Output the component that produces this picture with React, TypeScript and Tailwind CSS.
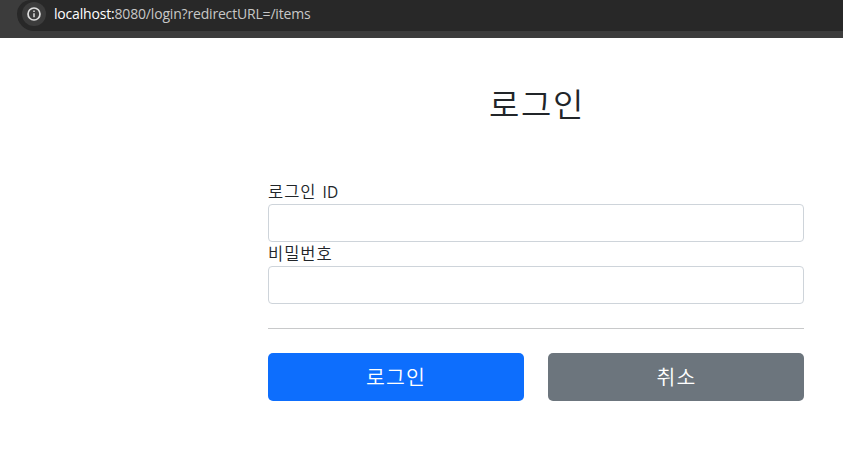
const fields = [
    { id: "loginId", label: "로그인", suffix: "ID", type: "text" },
    { id: "password", label: "비밀번호", suffix: "", type: "password" },
];

function InfoIcon() {
    return (
        <svg viewBox="0 0 14 14" className="h-[14px] w-[14px] text-[#dedede]" fill="none" stroke="currentColor">
            <circle cx="7" cy="7" r="6" strokeWidth="1.7" />
            <path d="M7 6.3v4M7 3.6v1.5" strokeWidth="1.5" />
        </svg>
    );
}

function AddressBar() {
    return (
        <div className="h-[38px] bg-[#3c3c3c] pl-[17px]">
            <div className="flex h-[31px] items-start rounded-bl-[17px] rounded-tl-[14px] bg-[#282828] pl-[5px]">
                <div className="mt-[2px] flex h-6 w-6 items-center justify-center rounded-full bg-[#3c3c3c]">
                    <InfoIcon />
                </div>
                <div className="ml-2 mt-[4px] whitespace-nowrap font-['Open_Sans','Noto_Sans',sans-serif] text-[14px] leading-5 tracking-[-0.18px] text-[#c7c7c7]">
                    <span className="text-white">localhost:</span>8080/login?redirectURL=/items
                </div>
            </div>
        </div>
    );
}

export default function App() {
    return (
        <div className="h-[453px] w-full overflow-hidden bg-white font-['Noto_Sans_CJK_KR',sans-serif] text-[#212529]">
            <AddressBar />

            <main className="ml-[268px] w-[536px]">
                <div className="pt-[46px] text-center">
                    <h2 className="pl-[2px] text-[33px] font-[350] leading-[38px] tracking-[1.6px]">로그인</h2>
                </div>

                <form className="mt-[58px]" onSubmit={(e) => e.preventDefault()}>
                    {fields.map((field) => (
                        <div key={field.id}>
                            <label htmlFor={field.id} className="block h-6 text-[16.5px] font-[350] leading-[22px] tracking-[1px]">
                                {field.label}
                                {field.suffix && (
                                    <span className="ml-0.5 font-['Open_Sans',sans-serif] text-[15.5px] font-normal tracking-normal"> {field.suffix}</span>
                                )}
                            </label>
                            <input
                                id={field.id}
                                type={field.type}
                                className="block h-[38px] w-full rounded border border-[#ced4da] bg-white px-3 outline-none"
                            />
                        </div>
                    ))}

                    <hr className="my-6 border-t border-[#c8c9ca]" />

                    <div className="grid grid-cols-2 gap-6">
                        <button type="submit" className="h-12 rounded-[5px] bg-[#0d6efd] pb-[3px] text-[20.5px] font-[350] leading-7 tracking-[1.2px] text-white">
                            로그인
                        </button>
                        <button type="button" className="h-12 rounded-[5px] bg-[#6c757d] pb-[3px] pl-[1px] text-[20.5px] font-[350] leading-7 tracking-[1.2px] text-white">
                            취소
                        </button>
                    </div>
                </form>
            </main>
        </div>
    );
}
